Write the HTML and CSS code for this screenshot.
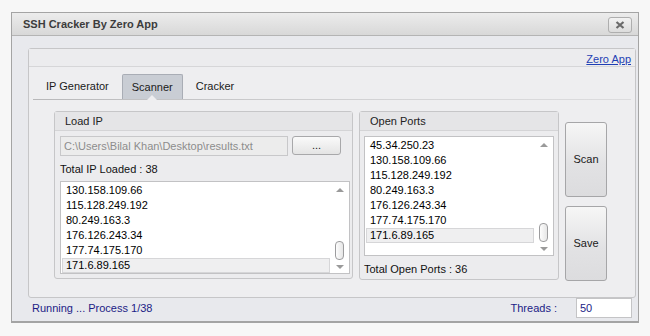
FILE: index.html
```html
<!DOCTYPE html>
<html lang="en">
<head>
    <meta charset="UTF-8">
    <title>SSH Cracker By Zero App</title>
    <link rel="stylesheet" href="styles.css">
</head>
<body>

<div class="window">
    <div class="titlebar">
        <span class="title">SSH Cracker By Zero App</span>
        <button class="close">
            <svg width="10" height="8" viewBox="0 0 10 8">
                <path d="M1.5 1 L8.5 7 M8.5 1 L1.5 7" stroke="#6a6a6a" stroke-width="2.2" fill="none"/>
            </svg>
        </button>
    </div>

    <div class="panel">
        <div class="panel-head"><a href="#">Zero App</a></div>

        <div class="tabs">
            <div class="tab">IP Generator</div>
            <div class="tab active">Scanner</div>
            <div class="tab">Cracker</div>
        </div>

        <div class="content">
            <!-- Load IP -->
            <div class="group load">
                <div class="group-head">Load IP</div>
                <div class="group-body">
                    <div class="file-row">
                        <input class="path" type="text" value="C:\Users\Bilal Khan\Desktop\results.txt" readonly>
                        <button class="browse">...</button>
                    </div>
                    <div class="label">Total IP Loaded : 38</div>
                    <div class="listbox load-list">
                        <ul class="items">
                            <li>130.158.109.66</li>
                            <li>115.128.249.192</li>
                            <li>80.249.163.3</li>
                            <li>176.126.243.34</li>
                            <li>177.74.175.170</li>
                            <li class="selected">171.6.89.165</li>
                        </ul>
                        <div class="scrollbar">
                            <span class="arrow up"></span>
                            <span class="thumb"></span>
                            <span class="arrow down"></span>
                        </div>
                    </div>
                </div>
            </div>

            <!-- Open Ports -->
            <div class="group ports">
                <div class="group-head">Open Ports</div>
                <div class="group-body">
                    <div class="listbox ports-list">
                        <ul class="items">
                            <li>45.34.250.23</li>
                            <li>130.158.109.66</li>
                            <li>115.128.249.192</li>
                            <li>80.249.163.3</li>
                            <li>176.126.243.34</li>
                            <li>177.74.175.170</li>
                            <li class="selected">171.6.89.165</li>
                        </ul>
                        <div class="scrollbar">
                            <span class="arrow up"></span>
                            <span class="thumb"></span>
                            <span class="arrow down"></span>
                        </div>
                    </div>
                    <div class="label">Total Open Ports : 36</div>
                </div>
            </div>

            <div class="actions">
                <button class="big-btn">Scan</button>
                <button class="big-btn">Save</button>
            </div>
        </div>
    </div>

    <div class="status">
        <span class="running">Running ... Process 1/38</span>
        <span class="threads">Threads :</span>
        <input class="threads-input" type="text" value="50">
    </div>
</div>

</body>
</html>
```

FILE: styles.css
```css
body {
    margin: 0;
    background-color: #f7f7f7;
    font-family: 'Liberation Sans', Arial, sans-serif;
    font-size: 11px;
    color: #000;
}

/* Window frame */
.window {
    margin: 12px 0 0 11px;
    width: 626px;
    height: 308px;
    border: 1px solid #a4a4a4;
    border-bottom-width: 2px;
    background-color: #e8e9ed;
    display: flex;
    flex-direction: column;
}

.titlebar {
    height: 22px;
    border-bottom: 1px solid #b4b4b4;
    background: linear-gradient(#ececec, #d8d8d8);
    display: flex;
    align-items: center;
    justify-content: space-between;
    padding: 0 6px 0 11px;
}

.title {
    font-weight: bold;
    color: #3c3c3c;
}

.close {
    width: 24px;
    height: 16px;
    margin-top: 3px;
    padding: 0;
    border: 1px solid #aeaeae;
    border-radius: 3px;
    background: linear-gradient(#f2f2f2, #dcdcdc);
    display: flex;
    align-items: center;
    justify-content: center;
}

/* Main panel */
.panel {
    margin: 12px 2px 0 16px;
    height: 250px;
    border: 1px solid #c6c6c8;
    border-radius: 3px;
    background-color: #eeeef0;
    display: flex;
    flex-direction: column;
}

.panel-head {
    height: 17px;
    border-bottom: 1px solid #d6d6d8;
    background-color: #ececee;
    display: flex;
    justify-content: flex-end;
    align-items: flex-end;
    padding-right: 4px;
}

.panel-head a {
    color: #1f3fb4;
    line-height: 14px;
}

/* Tabs */
.tabs {
    height: 25px;
    margin-top: 7px;
    padding-left: 7px;
    display: flex;
    gap: 3px;
    position: relative;
}

.tabs::after {
    content: '';
    position: absolute;
    left: 4px;
    right: 4px;
    bottom: -1px;
    height: 1px;
    background: linear-gradient(to right, #b8b8ba, #d4d4d6 60%, #dcdcde);
}

.tab {
    padding: 0 10px;
    line-height: 25px;
    color: #1a1a1a;
    position: relative;
}

.tab.active {
    background-color: #c9cdd4;
    border: 1px solid #a9adb5;
    border-bottom: none;
    border-radius: 2px 2px 0 0;
    padding: 0 9px;
    line-height: 24px;
}

.tab.active::after {
    content: '';
    position: absolute;
    left: 50%;
    bottom: -1px;
    margin-left: -5px;
    border-left: 5px solid transparent;
    border-right: 5px solid transparent;
    border-bottom: 5px solid #eeeef0;
    z-index: 1;
}

.content {
    display: flex;
    gap: 6px;
    padding: 12px 0 0 25px;
}

/* Group boxes */
.group {
    height: 166px;
    border: 1px solid #c6c6c8;
    border-radius: 3px;
    background-color: #ececee;
}

.group.load {
    width: 297px;
}

.group.ports {
    width: 198px;
    height: 167px;
}

.group-head {
    height: 18px;
    line-height: 18px;
    padding-left: 10px;
    border-bottom: 1px solid #d4d4d6;
    background-color: #e5e5e7;
    color: #222;
}

.group-body {
    padding: 5px 0 0 5px;
}

.ports .group-body {
    padding-left: 4px;
}

.file-row {
    display: flex;
    gap: 4px;
    height: 20px;
}

.path {
    width: 220px;
    height: 18px;
    margin: 0;
    padding: 0 3px;
    border: 1px solid #c8c8ca;
    background-color: #ececec;
    color: #8c8c8c;
    font-family: inherit;
    font-size: 11px;
}

.browse {
    width: 49px;
    height: 19px;
    padding: 0;
    border: 1px solid #a8a8aa;
    border-radius: 3px;
    background: linear-gradient(#fafafa, #e4e4e4);
    font-family: inherit;
    font-size: 11px;
    color: #222;
}

.label {
    height: 25px;
    line-height: 27px;
    color: #111;
}

/* List boxes */
.listbox {
    width: 288px;
    background-color: #fff;
    border: 1px solid #c2c2c4;
    display: flex;
}

.load-list {
    height: 91px;
}

.ports-list {
    width: 188px;
    height: 118px;
}

.items {
    list-style: none;
    margin: 0;
    padding: 1px 0 0 1px;
    flex: 1;
}

.items li {
    height: 15px;
    line-height: 15px;
    padding-left: 4px;
}

.items li.selected {
    background-color: #efeff0;
    outline: 1px solid #d6d6d8;
    outline-offset: -1px;
}

.scrollbar {
    width: 19px;
    display: flex;
    flex-direction: column;
    align-items: center;
    padding: 6px 0 4px;
}

.arrow {
    width: 0;
    height: 0;
    border-left: 4px solid transparent;
    border-right: 4px solid transparent;
}

.arrow.up {
    border-bottom: 4px solid #9a9a9a;
}

.arrow.down {
    border-top: 4px solid #9a9a9a;
    margin-top: 5px;
}

.thumb {
    margin-top: auto;
    width: 7px;
    height: 17px;
    border: 1px solid #9c9c9e;
    border-radius: 4px;
    background: linear-gradient(to right, #fdfdfd, #e6e6e6);
}

/* Scan / Save */
.actions {
    display: flex;
    flex-direction: column;
    gap: 9px;
    padding-top: 11px;
}

.big-btn {
    width: 42px;
    height: 75px;
    padding: 0;
    border: 1px solid #a6a6a8;
    border-radius: 3px;
    background: linear-gradient(#f6f6f6, #e2e2e4 55%, #dcdcde);
    font-family: inherit;
    font-size: 11px;
    color: #1a1a1a;
}

/* Status row */
.status {
    flex: 1;
    display: flex;
    align-items: center;
    padding: 0 6px 3px 20px;
    color: #1c1c86;
}

.running {
    flex: 1;
}

.threads {
    margin-right: 19px;
}

.threads-input {
    width: 48px;
    height: 18px;
    margin: 0;
    padding: 0 3px;
    border: 1px solid #c4c4c6;
    background-color: #fff;
    color: #1c1c86;
    font-family: inherit;
    font-size: 11px;
}
```
